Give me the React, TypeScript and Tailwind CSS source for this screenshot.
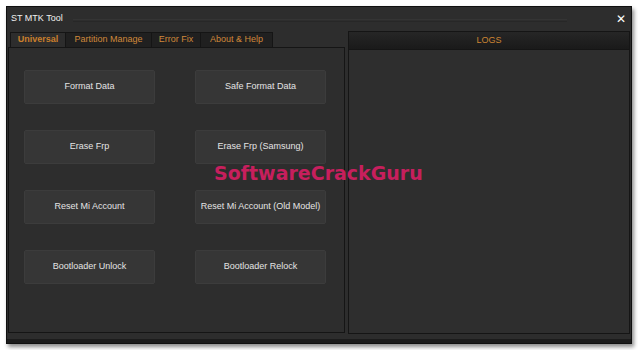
import React from "react"

const buttons = [
  ["Format Data", "Safe Format Data"],
  ["Erase Frp", "Erase Frp (Samsung)"],
  ["Reset Mi Account", "Reset Mi Account (Old Model)"],
  ["Bootloader Unlock", "Bootloader Relock"],
]

const tabs = [
  { label: "Universal", w: "w-[56px]" },
  { label: "Partition Manage", w: "w-[86px]" },
  { label: "Error Fix", w: "w-[49px]" },
  { label: "About & Help", w: "w-[72px]" },
]

function ToolButton({ label }: { label: string }) {
  return (
    <button className="w-[131px] h-[34px] rounded-[2px] bg-[#363636] border border-[#3c3c3c] text-[#e4e4e4] text-[9px] whitespace-nowrap flex items-center justify-center">
      {label}
    </button>
  )
}

export default function App() {
  return (
    <div
      className="w-[638px] h-[350px] bg-white pt-[6px] pl-[6px] overflow-hidden"
      style={{ fontFamily: "'Liberation Sans', Arial, sans-serif" }}
    >
      <div className="w-[626px] h-[338px] bg-[#2d2d2d] border border-[#101010] shadow-[2px_3px_4px_rgba(0,0,0,0.45)] flex flex-col">
        {/* title bar */}
        <div className="h-[23px] flex items-center pl-[4px] pr-[5px] gap-[10px]">
          <span className="text-[9px] text-[#f0f0f0]">ST MTK Tool</span>
          <div className="w-[494px] h-[3px] mt-[3px] border-t border-[#343434] border-b border-b-[#272727]" />
          <span className="ml-auto text-white text-[12px] font-bold leading-none" style={{ fontFamily: "'DejaVu Sans', sans-serif" }}>
            ✕
          </span>
        </div>

        <div className="flex flex-1 pl-[1px] pr-[1px]">
          {/* left side: tabs */}
          <div className="flex flex-col pt-[1px]">
            <div className="flex h-[15px] pl-[2px] items-stretch mt-[1px]">
              {tabs.map((t, i) => (
                <div
                  key={t.label}
                  className={
                    i === 0
                      ? `${t.w} flex items-center justify-center text-[9px] font-bold text-[#c97f2c] bg-[#2d2d2d] border border-[#151515] border-b-0`
                      : `${t.w} flex items-center justify-center text-[9px] text-[#d0883a] bg-[#202020] border-t border-r border-[#151515]`
                  }
                >
                  {t.label}
                </div>
              ))}
            </div>
            <div className="w-[337px] h-[286px] border border-[#151515] relative">
              <div className="grid grid-cols-2 gap-x-[40px] gap-y-[26px] pl-[15px] pt-[22px] w-max">
                {buttons.flat().map((b) => (
                  <ToolButton key={b} label={b} />
                ))}
              </div>
              <span
                className="absolute left-[205px] top-[111px] text-[19px] font-bold text-[#c71f5d] whitespace-nowrap z-10"
                style={{ fontFamily: "'DejaVu Sans', sans-serif" }}
              >
                SoftwareCrackGuru
              </span>
            </div>
          </div>

          {/* logs */}
          <div className="ml-[3px] mt-[1px] w-[282px] h-[303px] border border-[#151515] flex flex-col">
            <div className="h-[18px] bg-gradient-to-b from-[#262626] to-[#1a1a1a] flex items-center justify-center pt-[1px] text-[9px] text-[#cc8433] border-b border-[#151515]">
              LOGS
            </div>
            <div className="flex-1 bg-[#2e2e2e]" />
          </div>
        </div>

        <div className="h-[4px] bg-[#1c1c1c] mt-auto" />
      </div>
    </div>
  )
}
